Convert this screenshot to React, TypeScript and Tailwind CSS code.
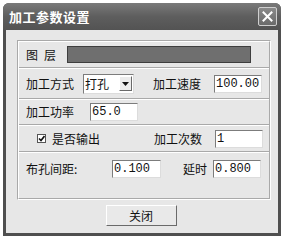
import React from "react";

const font = { fontFamily: '"Noto Sans CJK SC", "Liberation Sans", sans-serif' };
const mono = { fontFamily: '"Liberation Mono", "Noto Sans CJK SC", monospace' };

function Field({ value, className }: { value: string; className: string }) {
  return (
    <div
      className={`h-[18px] bg-white border border-t-[#7c7c7c] border-l-[#7c7c7c] border-b-[#dcdcdc] border-r-[#dcdcdc] text-[12px] leading-[16px] pl-[1px] text-[#111] ${className}`}
      style={mono}
    >
      {value}
    </div>
  );
}

function Sep() {
  return (
    <div className="flex flex-col">
      <div className="h-px bg-[#a9a9a9]" />
      <div className="h-px bg-white" />
    </div>
  );
}

export default function App() {
  return (
    <div className="w-[284px] h-[241px] bg-white pt-[3px] pl-[3px]" style={font}>
      <div className="w-[278px] h-[233px] flex flex-col rounded-t-[6px] overflow-hidden bg-[#4f4f4f]">
        {/* title bar */}
        <div className="h-[27px] flex items-center justify-between pl-[6px] pr-[4px] bg-gradient-to-b from-[#7a7a7a] via-[#5e5e5e] to-[#535353]">
          <span className="text-white text-[13px] font-bold tracking-[0.5px]">加工参数设置</span>
          <div className="w-[19px] h-[19px] border border-[#cfcfcf] rounded-[2px] bg-gradient-to-b from-[#8a8a8a] to-[#6a6a6a] flex items-center justify-center">
            <svg width="11" height="11" viewBox="0 0 11 11">
              <path d="M1.5 1.5 L9.5 9.5 M9.5 1.5 L1.5 9.5" stroke="white" strokeWidth="2" strokeLinecap="square" />
            </svg>
          </div>
        </div>
        {/* client */}
        <div className="flex-1 mx-[3px] mb-[3px] bg-[#e7e7e7] flex flex-col pt-[10px] pl-[11px] pr-[7px]">
          <div className="h-[160px] border border-t-[#a9a9a9] border-l-[#a9a9a9] border-b-white border-r-white flex flex-col text-[12px] text-[#111]">
            <div className="border border-t-white border-l-white border-b-[#a9a9a9] border-r-[#a9a9a9] flex-1 flex flex-col">
              {/* 图层 */}
              <div className="h-[25px] flex items-center pl-[7px]">
                <span className="w-[41px] tracking-[6px]">图层</span>
                <div className="w-[184px] h-[17px] bg-[#6f6f6f] border border-[#3e3e3e]" />
              </div>
              <Sep />
              {/* 加工方式 */}
              <div className="h-[29px] flex items-center pl-[7px]">
                <span className="w-[57px]">加工方式</span>
                <div className="w-[51px] h-[20px] bg-white border border-t-[#7c7c7c] border-l-[#7c7c7c] border-b-[#dcdcdc] border-r-[#dcdcdc] flex items-center justify-between pl-[1px] pr-[1px]">
                  <span className="leading-[16px]">打孔</span>
                  <div className="w-[13px] h-[15px] bg-[#ececec] border border-t-white border-l-white border-b-[#6a6a6a] border-r-[#6a6a6a] flex items-center justify-center">
                    <svg width="7" height="4" viewBox="0 0 7 4">
                      <path d="M0 0 H7 L3.5 4 Z" fill="#111" />
                    </svg>
                  </div>
                </div>
                <span className="ml-[19px] w-[61px]">加工速度</span>
                <Field value="100.00" className="w-[48px]" />
              </div>
              <Sep />
              {/* 加工功率 */}
              <div className="h-[24px] flex items-center pl-[7px]">
                <span className="w-[64px]">加工功率</span>
                <Field value="65.0" className="w-[48px]" />
              </div>
              <Sep />
              {/* 是否输出 */}
              <div className="h-[25px] flex items-center pl-[18px]">
                <div className="w-[9px] h-[9px] bg-white border border-[#555] flex items-center justify-center">
                  <svg width="7" height="7" viewBox="0 0 7 7">
                    <path d="M1 3.5 L3 5.5 L6.5 1" stroke="#111" strokeWidth="1.6" fill="none" />
                  </svg>
                </div>
                <span className="ml-[6px] w-[102px]">是否输出</span>
                <span className="w-[61px]">加工次数</span>
                <Field value="1" className="w-[48px]" />
              </div>
              <Sep />
              {/* 布孔间距 */}
              <div className="h-[31px] flex items-center pl-[7px]">
                <span className="w-[86px]">布孔间距:</span>
                <Field value="0.100" className="w-[49px]" />
                <span className="ml-[22px] w-[30px]">延时</span>
                <Field value="0.800" className="w-[48px]" />
              </div>
            </div>
          </div>
          <div className="flex justify-center mt-[5px] pr-[6px]">
            <div className="w-[71px] h-[21px] bg-[#e9e9e9] border border-t-white border-l-white border-b-[#6a6a6a] border-r-[#6a6a6a] flex items-center justify-center text-[12px] text-[#111]">
              关闭
            </div>
          </div>
        </div>
      </div>
    </div>
  );
}
